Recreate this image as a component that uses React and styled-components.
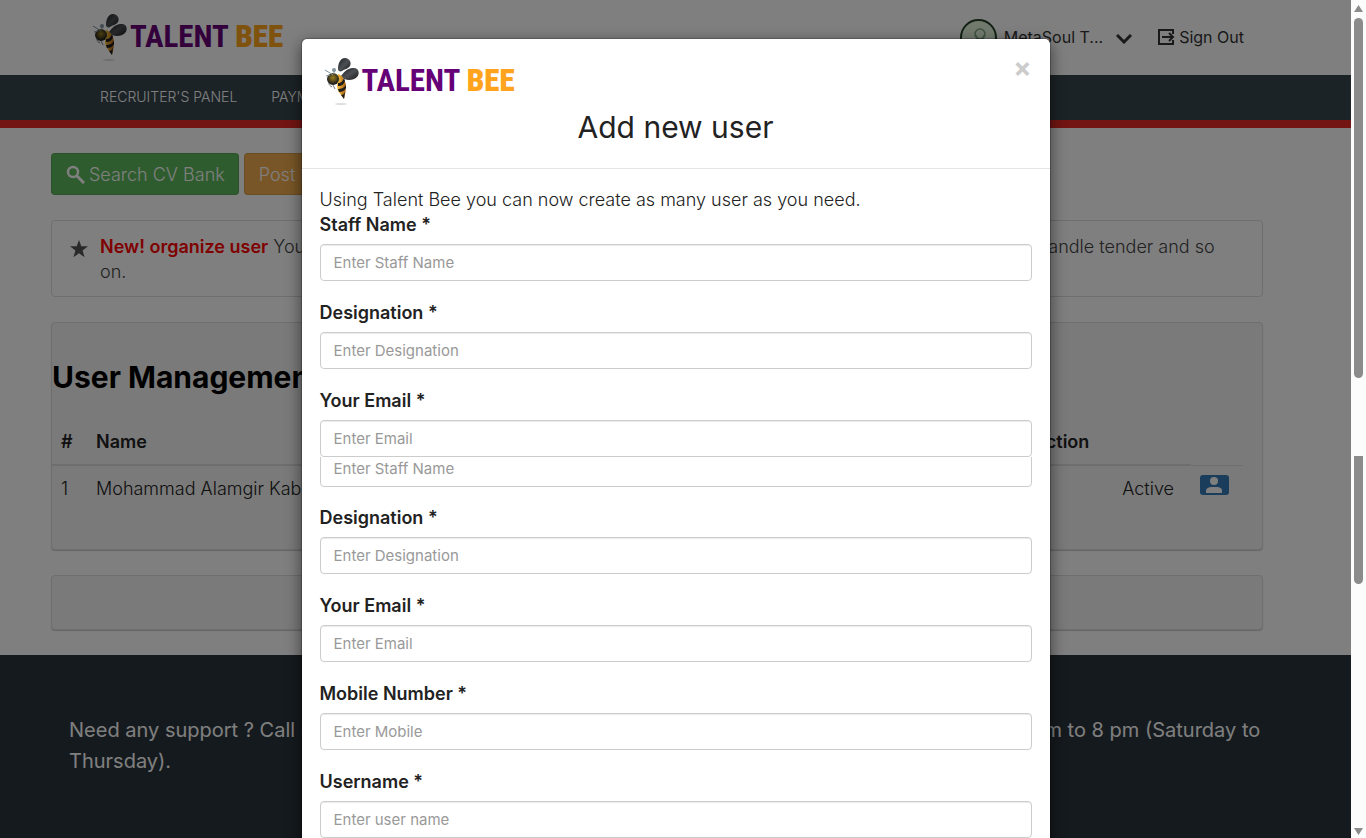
import React from 'react';
import styled, { createGlobalStyle } from 'styled-components';

const GlobalStyle = createGlobalStyle`
  * {
    box-sizing: border-box;
  }
  body {
    margin: 0;
    font-family: Inter, "Liberation Sans", sans-serif;
    font-size: 18px;
    font-weight: 300;
    line-height: 26px;
    color: #222;
    background: #fff;
  }
  button, input {
    font-family: inherit;
    font-weight: inherit;
  }
`

const Bee = () => (
  <BeeSvg viewBox="0 0 36 50" aria-hidden="true">
    <defs>
      <linearGradient id="wing" x1="0" y1="0" x2="1" y2="1">
        <stop offset="0" stopColor="#1c1e20" />
        <stop offset=".5" stopColor="#4c5054" />
        <stop offset="1" stopColor="#1a1a1a" />
      </linearGradient>
      <linearGradient id="tail" x1="0" y1="0" x2="1" y2="0">
        <stop offset="0" stopColor="#ffc843" />
        <stop offset="1" stopColor="#a35a10" />
      </linearGradient>
      <radialGradient id="head" cx=".5" cy=".4" r=".5">
        <stop offset="0" stopColor="#9c7f1c" />
        <stop offset="1" stopColor="#24231f" />
      </radialGradient>
    </defs>
    <ellipse cx="17" cy="47" rx="6" ry="1" fill="#ddd" />
    <path d="M14 12C14 7 16 1 21 1c4 0 7 4 5 8-2 3-5 3-8 5-2 1-4 0-4-2z" fill="url(#wing)" />
    <path d="M17 19c2-3 7-9 13-8 5 0 6 6 3 9-4 4-13 4-16-1z" fill="url(#wing)" />
    <path d="M14 17c4 1 7 6 8 11 0 5-1 10-2 14-2-4-7-7-7-13z" fill="url(#tail)" />
    <path d="M14 26c3 0 5-2 6-5l1 3c-1 3-3 5-7 5zM14 32c3 0 6-1 8-4v3c-2 3-4 4-7 4zM17 38c2 0 3-1 4-3l-1 7z" fill="#1f1d1a" />
    <ellipse cx="9" cy="22" rx="6" ry="6" fill="url(#head)" />
    <circle cx="10" cy="13" r="2" fill="#8296a3" />
    <path d="M1 13l5 3 3 2M2 19l4-1M10 14v3" stroke="#8296a3" strokeWidth="1" fill="none" />
    <path d="M5 26c0 2 1 3 3 4M9 28l2 4" stroke="#777" strokeWidth="1" fill="none" />
  </BeeSvg>
)

const Brand = () => (
  <BrandLink href="#home">
    <Bee />
    <span>TALENT <b>BEE</b></span>
  </BrandLink>
)

const Field = ({ id, label, placeholder, type = 'text' }) => (
  <FormGroup>
    <label htmlFor={id}>{label} *</label>
    <Input id={id} type={type} placeholder={placeholder} />
  </FormGroup>
)

const Header = () => (
  <TopBar>
    <Brand />
    <Account>
      <UserMenu type="button">
        <Avatar>
          <svg width="20" height="28" viewBox="0 0 20 28" fill="none" stroke="#7fa680" strokeWidth="1.5">
            <circle cx="9" cy="9" r="5" />
            <path d="M5 10c0 5 8 5 8 0M1 24v-4c0-4 3-6 8-6s8 2 8 6v4" />
          </svg>
        </Avatar>
        <span>MetaSoul T...</span>
        <svg width="16" height="10" viewBox="0 0 16 10" fill="none" stroke="#333" strokeWidth="3">
          <path d="M1 1l7 7 7-7" />
        </svg>
      </UserMenu>
      <SignOut href="#signout">
        <svg width="17" height="17" viewBox="0 0 17 17" fill="none" stroke="#333" strokeWidth="2">
          <path d="M15 5V1H1v14h14v-4M4 8h11M11 4l4 4-4 4" />
        </svg>
        Sign Out
      </SignOut>
    </Account>
  </TopBar>
)

const Dashboard = () => (
  <Main>
    <Actions>
      <Button $color="#5cb85c" type="button">
        <svg width="19" height="19" viewBox="0 0 19 19" fill="none" stroke="#fff">
          <circle cx="7" cy="7" r="5" strokeWidth="2.5" />
          <path d="M11 11l7 7" strokeWidth="3" />
        </svg>
        Search CV Bank
      </Button>
      <Button $color="#f0ad4e" type="button">Post New Job</Button>
    </Actions>
    <Notice>
      <svg width="18" height="18" viewBox="0 0 18 18" fill="#555">
        <path d="M9 0l2.300 6.300H18l-5.400 4.200 2 6.800L9 13.300l-5.600 4 2-6.800L0 6.300h6.700z" />
      </svg>
      <p><strong>New! organize user</strong> You can now create as many user as you need to post job, manage teams, search cv bank, handle tender and so on.</p>
    </Notice>
    <Panel>
      <h1>User Management</h1>
      <UserTable>
        <thead>
          <tr><th>#</th><th>Name</th><th>Designation</th><th>Action</th><th /></tr>
        </thead>
        <tbody>
          <tr>
            <td>1</td>
            <td>Mohammad Alamgir Kabir</td>
            <td>Manager</td>
            <td>Active</td>
            <td>
              <UserButton type="button" aria-label="User profile">
                <svg width="17" height="16" viewBox="0 0 17 16" fill="#fff">
                  <circle cx="8" cy="4" r="4" />
                  <path d="M0 16v-2c0-3 3-4 6-4h4c4 0 6 1 6 4v2z" />
                </svg>
              </UserButton>
            </td>
          </tr>
        </tbody>
      </UserTable>
    </Panel>
    <EmptyPanel />
  </Main>
)

const UserModal = () => (
  <Dialog role="dialog" aria-labelledby="modal-title">
    <ModalHeader>
      <HeaderRow>
        <Brand />
        <Close type="button" aria-label="Close">×</Close>
      </HeaderRow>
      <h2 id="modal-title">Add new user</h2>
    </ModalHeader>
    <ModalBody>
      <p>Using Talent Bee you can now create as many user as you need.</p>
      <Fields>
        <Field id="staff" label="Staff Name" placeholder="Enter Staff Name" />
        <Field id="designation" label="Designation" placeholder="Enter Designation" />
        <Field id="email" label="Your Email" placeholder="Enter Email" type="email" />
      </Fields>
      <Clipped>
        <Input aria-label="Staff Name" placeholder="Enter Staff Name" />
      </Clipped>
      <Fields>
        <Field id="designation2" label="Designation" placeholder="Enter Designation" />
        <Field id="email2" label="Your Email" placeholder="Enter Email" type="email" />
        <Field id="mobile" label="Mobile Number" placeholder="Enter Mobile" />
        <Field id="username" label="Username" placeholder="Enter user name" />
      </Fields>
    </ModalBody>
  </Dialog>
)

const App = () => (
  <Screen>
    <GlobalStyle />
    <Page>
      <Header />
      <Nav>
        <a href="#panel">RECRUITER'S PANEL</a>
        <a href="#payment">PAYMENT</a>
      </Nav>
      <Dashboard />
      <Footer>
        <p>Need any support ? Call us now, at our helpline number for any kind of help with your account, from 9 am to 8 pm (Saturday to Thursday).</p>
      </Footer>
      <Backdrop>
        <UserModal />
      </Backdrop>
    </Page>
    <ScrollTrack>
      <Arrow />
      <Thumb $grow={360} $radius="5px" />
      <Gap $grow={78} />
      <Thumb $grow={128} $radius="0 0 5px 5px" />
      <Gap $grow={244} />
      <Arrow $down />
    </ScrollTrack>
  </Screen>
)

const Screen = styled.div`
  display: flex;
  height: 100vh;
  overflow: hidden;
`

const Page = styled.div`
  position: relative;
  flex: 1;
  min-width: 0;
  display: flex;
  flex-direction: column;
  overflow: hidden;
`

const TopBar = styled.header`
  display: flex;
  justify-content: space-between;
  height: 75px;
  padding: 13px 107px 0 92px;
`

const BrandLink = styled.a`
  display: flex;
  align-items: flex-start;
  gap: 2px;
  text-decoration: none;
  white-space: nowrap;
  color: #660076;
  font-family: "Roboto Condensed", "Liberation Sans Narrow", Lato, sans-serif;
  font-size: 31px;
  line-height: 48px;
  font-weight: bold;
  b {
    color: #ffa41c;
  }
`

const BeeSvg = styled.svg`
  width: 36px;
  height: 50px;
`

const Account = styled.div`
  display: flex;
  align-items: center;
  height: 48px;
  gap: 26px;
`

const UserMenu = styled.button`
  display: flex;
  align-items: center;
  gap: 7px;
  padding: 0;
  border: 0;
  background: none;
  font-size: 16px;
  font-weight: 400;
  color: #333;
  svg:last-child {
    margin: 4px 0 0 6px;
  }
`

const Avatar = styled.span`
  display: flex;
  justify-content: center;
  align-items: center;
  width: 37px;
  height: 37px;
  border: 2px solid #274329;
  border-radius: 50%;
  background: #e4f4dc;
`

const SignOut = styled.a`
  display: flex;
  align-items: center;
  gap: 4px;
  font-size: 16px;
  font-weight: 400;
  color: #333;
  text-decoration: none;
`

const Nav = styled.nav`
  display: flex;
  gap: 34px;
  height: 53px;
  padding: 9px 100px;
  background: #38464c;
  border-bottom: 8px solid #e52a27;
  a {
    color: #fff;
    font-size: 14px;
    text-decoration: none;
  }
`

const Main = styled.main`
  display: flex;
  flex-direction: column;
  gap: 25px;
  padding: 25px 88px 25px 51px;
`

const Actions = styled.div`
  display: flex;
  gap: 5px;
`

const Button = styled.button`
  display: flex;
  align-items: center;
  gap: 4px;
  height: 42px;
  padding: 0 13px 0 14px;
  border: 1px solid rgba(0, 0, 0, .1);
  border-radius: 4px;
  background: ${props => props.$color};
  color: #fff;
  font-size: 18px;
`

const Notice = styled.section`
  display: flex;
  gap: 12px;
  min-height: 77px;
  padding: 13px 18px 12px;
  border: 1px solid #ddd;
  border-radius: 4px;
  color: #444;
  line-height: 25px;
  svg {
    flex: none;
    margin-top: 6px;
  }
  p {
    margin: 0;
  }
  strong {
    font-weight: 600;
    color: #f00;
  }
`

const Panel = styled.section`
  height: 228px;
  padding-top: 36px;
  border: 1px solid #ddd;
  border-radius: 4px;
  background: #f5f5f5;
  box-shadow: 0 1px 1px rgba(0, 0, 0, .2);
  h1 {
    margin: 0;
    font-size: 30px;
    line-height: 36px;
    color: #000;
  }
`

const UserTable = styled.table`
  width: calc(100% - 19px);
  margin-top: 23px;
  border-collapse: collapse;
  table-layout: fixed;
  th, td {
    height: 47px;
    padding: 0 9px;
    text-align: left;
  }
  th {
    padding-top: 2px;
    border-bottom: 2px solid #ddd;
    font-weight: 600;
  }
  th:first-child {
    width: 35px;
  }
  th:nth-child(4) {
    width: 167px;
  }
  th:last-child {
    width: 52px;
    border-bottom-width: 1px;
  }
  td:nth-child(4) {
    text-align: right;
    padding-right: 17px;
  }
`

const UserButton = styled.button`
  display: flex;
  justify-content: center;
  align-items: center;
  width: 29px;
  height: 20px;
  margin-bottom: 8px;
  padding: 0;
  border: 0;
  border-radius: 3px;
  background: #337ab7;
`

const EmptyPanel = styled(Panel)`
  height: 55px;
  padding: 0;
`

const Footer = styled.footer`
  flex: 1;
  padding: 60px 69px;
  background: #2a343c;
  color: #fff;
  font-size: 20px;
  font-weight: 400;
  line-height: 31px;
  p {
    margin: 0;
  }
`

const Backdrop = styled.div`
  position: absolute;
  inset: 0;
  padding-top: 38px;
  overflow: hidden;
  background: rgba(0, 0, 0, .5);
`

const Dialog = styled.div`
  max-width: 750px;
  margin: 0 auto;
  border: 1px solid rgba(0, 0, 0, .2);
  border-radius: 6px;
  background: #fff;
  background-clip: padding-box;
  box-shadow: 0 5px 15px rgba(0, 0, 0, .5);
`

const ModalHeader = styled.div`
  padding: 18px 18px 21px;
  border-bottom: 1px solid #e5e5e5;
  h2 {
    margin: 0;
    font-size: 30px;
    line-height: 40px;
    font-weight: 400;
    text-align: center;
  }
`

const HeaderRow = styled.div`
  display: flex;
  justify-content: space-between;
  align-items: flex-start;
  padding-left: 4px;
`

const Close = styled.button`
  padding: 0;
  border: 0;
  background: none;
  color: #ccc;
  font-size: 27px;
  line-height: 22px;
  font-weight: bold;
`

const ModalBody = styled.form`
  padding: 18px;
  > p {
    margin: 0;
    line-height: 25px;
  }
`

const Fields = styled.div`
  display: flex;
  flex-direction: column;
  gap: 19px;
`

const FormGroup = styled.div`
  label {
    display: block;
    margin-bottom: 6px;
    font-weight: 600;
  }
`

const Input = styled.input`
  display: block;
  width: 100%;
  height: 37px;
  padding: 0 13px;
  border: 1px solid #ccc;
  border-radius: 4px;
  box-shadow: inset 0 1px 1px rgba(0, 0, 0, .08);
  background: #fff;
  color: #555;
  font-size: 15px;
  font-weight: 400;
  &::placeholder {
    color: #999;
  }
`

const Clipped = styled.div`
  display: flex;
  align-items: flex-end;
  height: 30px;
  margin-bottom: 18px;
  overflow: hidden;
  input {
    flex: none;
  }
`

const ScrollTrack = styled.div`
  display: flex;
  flex-direction: column;
  width: 15px;
  padding: 5px 3px 3px;
  background: #fcfcfc;
`

const Arrow = styled.div`
  height: 7px;
  margin-bottom: ${props => props.$down ? 0 : '6px'};
  background: #8b8b8b;
  clip-path: ${props => props.$down ? 'polygon(0 0, 100% 0, 50% 100%)' : 'polygon(50% 0, 100% 100%, 0 100%)'};
`

const Gap = styled.div`
  flex: ${props => props.$grow} 0 0;
`

const Thumb = styled(Gap)`
  background: #8b8b8b;
  border-radius: ${props => props.$radius};
`

export default App;
